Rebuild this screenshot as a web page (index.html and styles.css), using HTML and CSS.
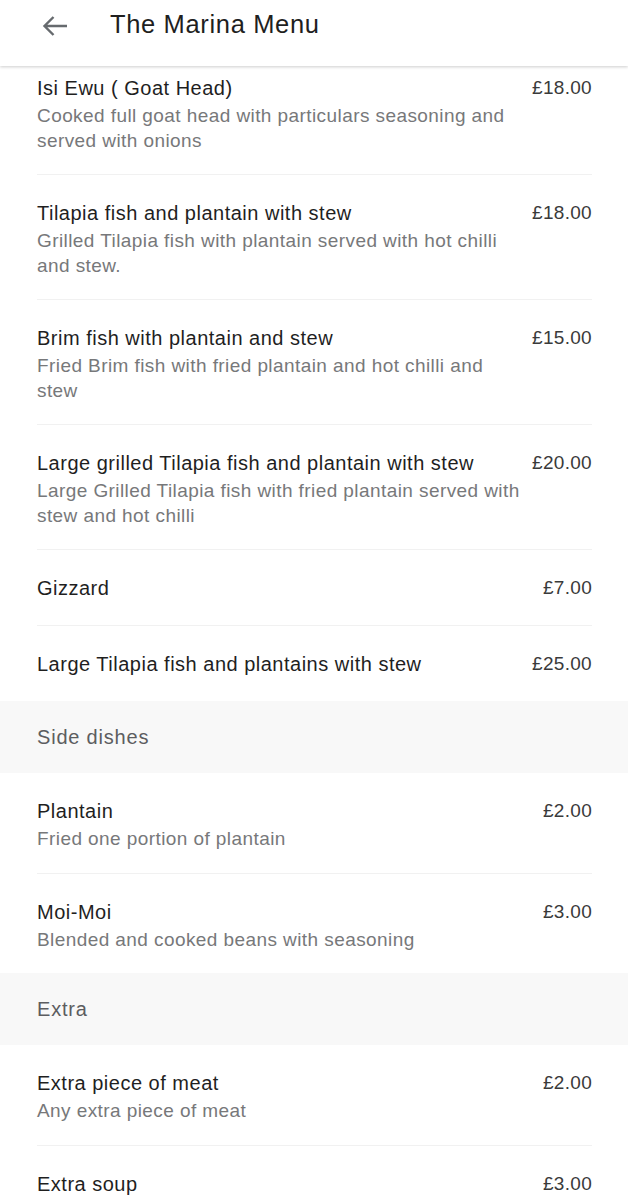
FILE: index.html
```html
<!DOCTYPE html>
<html lang="en">
<head>
<meta charset="utf-8">
<title>The Marina Menu</title>
<link rel="stylesheet" href="styles.css">
</head>
<body>
<header class="topbar">
  <button class="back" aria-label="Back">
    <svg width="26" height="22" viewBox="0 0 26 22"><path d="M25 11H2.5M11.5 2L2.5 11l9 9" fill="none" stroke="#666a6e" stroke-width="2.4" stroke-linecap="butt" stroke-linejoin="miter"/></svg>
  </button>
  <h1 class="title">The Marina Menu</h1>
</header>
<main class="menu">
  <section class="items">
    <div class="item first with-desc">
      <div class="info"><div class="name">Isi Ewu ( Goat Head)</div><div class="desc">Cooked full goat head with particulars seasoning and served with onions</div></div>
      <div class="price">£18.00</div>
    </div>
    <div class="item with-desc">
      <div class="info"><div class="name">Tilapia fish and plantain with stew</div><div class="desc">Grilled Tilapia fish with plantain served with hot chilli and stew.</div></div>
      <div class="price">£18.00</div>
    </div>
    <div class="item with-desc">
      <div class="info"><div class="name">Brim fish with plantain and stew</div><div class="desc">Fried Brim fish with fried plantain and hot chilli and stew</div></div>
      <div class="price">£15.00</div>
    </div>
    <div class="item with-desc">
      <div class="info"><div class="name">Large grilled Tilapia fish and plantain with stew</div><div class="desc">Large Grilled Tilapia fish with fried plantain served with stew and hot chilli</div></div>
      <div class="price">£20.00</div>
    </div>
    <div class="item">
      <div class="info"><div class="name">Gizzard</div></div>
      <div class="price">£7.00</div>
    </div>
    <div class="item">
      <div class="info"><div class="name">Large Tilapia fish and plantains with stew</div></div>
      <div class="price">£25.00</div>
    </div>
  </section>
  <h2 class="section">Side dishes</h2>
  <section class="items">
    <div class="item with-desc">
      <div class="info"><div class="name">Plantain</div><div class="desc">Fried one portion of plantain</div></div>
      <div class="price">£2.00</div>
    </div>
    <div class="item with-desc">
      <div class="info"><div class="name">Moi-Moi</div><div class="desc">Blended and cooked beans with seasoning</div></div>
      <div class="price">£3.00</div>
    </div>
  </section>
  <h2 class="section">Extra</h2>
  <section class="items">
    <div class="item with-desc">
      <div class="info"><div class="name">Extra piece of meat</div><div class="desc">Any extra piece of meat</div></div>
      <div class="price">£2.00</div>
    </div>
    <div class="item">
      <div class="info"><div class="name">Extra soup</div></div>
      <div class="price">£3.00</div>
    </div>
  </section>
</main>
</body>
</html>
```
FILE: styles.css
```css
* { box-sizing: border-box; }
html, body { margin: 0; padding: 0; background: #fff; }
body {
  font-family: "Liberation Sans", Arial, Helvetica, sans-serif;
  color: #1f1f1f;
  width: 628px;
  overflow: hidden;
}
.topbar {
  height: 66px;
  display: flex;
  align-items: center;
  background: #fff;
  box-shadow: 0 1px 3px rgba(0,0,0,0.2);
  position: relative;
  z-index: 2;
}
.back {
  border: 0;
  background: none;
  padding: 0;
  margin: -14px 0 0 42px;
  width: 26px;
  height: 22px;
  display: flex;
}
.title {
  margin: -18px 0 0 42px;
  font-size: 25.5px;
  font-weight: 400;
  color: #1f1f1f;
  letter-spacing: 0.65px;
}
.menu { display: flex; flex-direction: column; }
.items { padding: 0 36px 0 37px; }
.item {
  display: flex;
  justify-content: space-between;
  gap: 10px;
  padding: 25px 0 24px;
  border-top: 1px solid #f1f1f1;
}
.item.with-desc { padding-bottom: 21px; }
.item:first-child { border-top: 0; }
.item.first { padding-top: 9px; }
.info { flex: 1; min-width: 0; }
.name {
  font-size: 20px;
  line-height: 26px;
  letter-spacing: 0.5px;
  color: #1f1f1f;
}
.desc {
  margin-top: 3px;
  font-size: 19px;
  line-height: 24.5px;
  letter-spacing: 0.42px;
  color: #77787a;
}
.price {
  font-size: 19px;
  line-height: 26px;
  letter-spacing: 0.3px;
  color: #3a3a3a;
  white-space: nowrap;
}
.section {
  margin: 0;
  height: 72px;
  display: flex;
  align-items: center;
  padding-left: 37px;
  background: #f8f8f8;
  font-size: 20px;
  font-weight: 400;
  letter-spacing: 0.8px;
  color: #5c5d60;
}
```
